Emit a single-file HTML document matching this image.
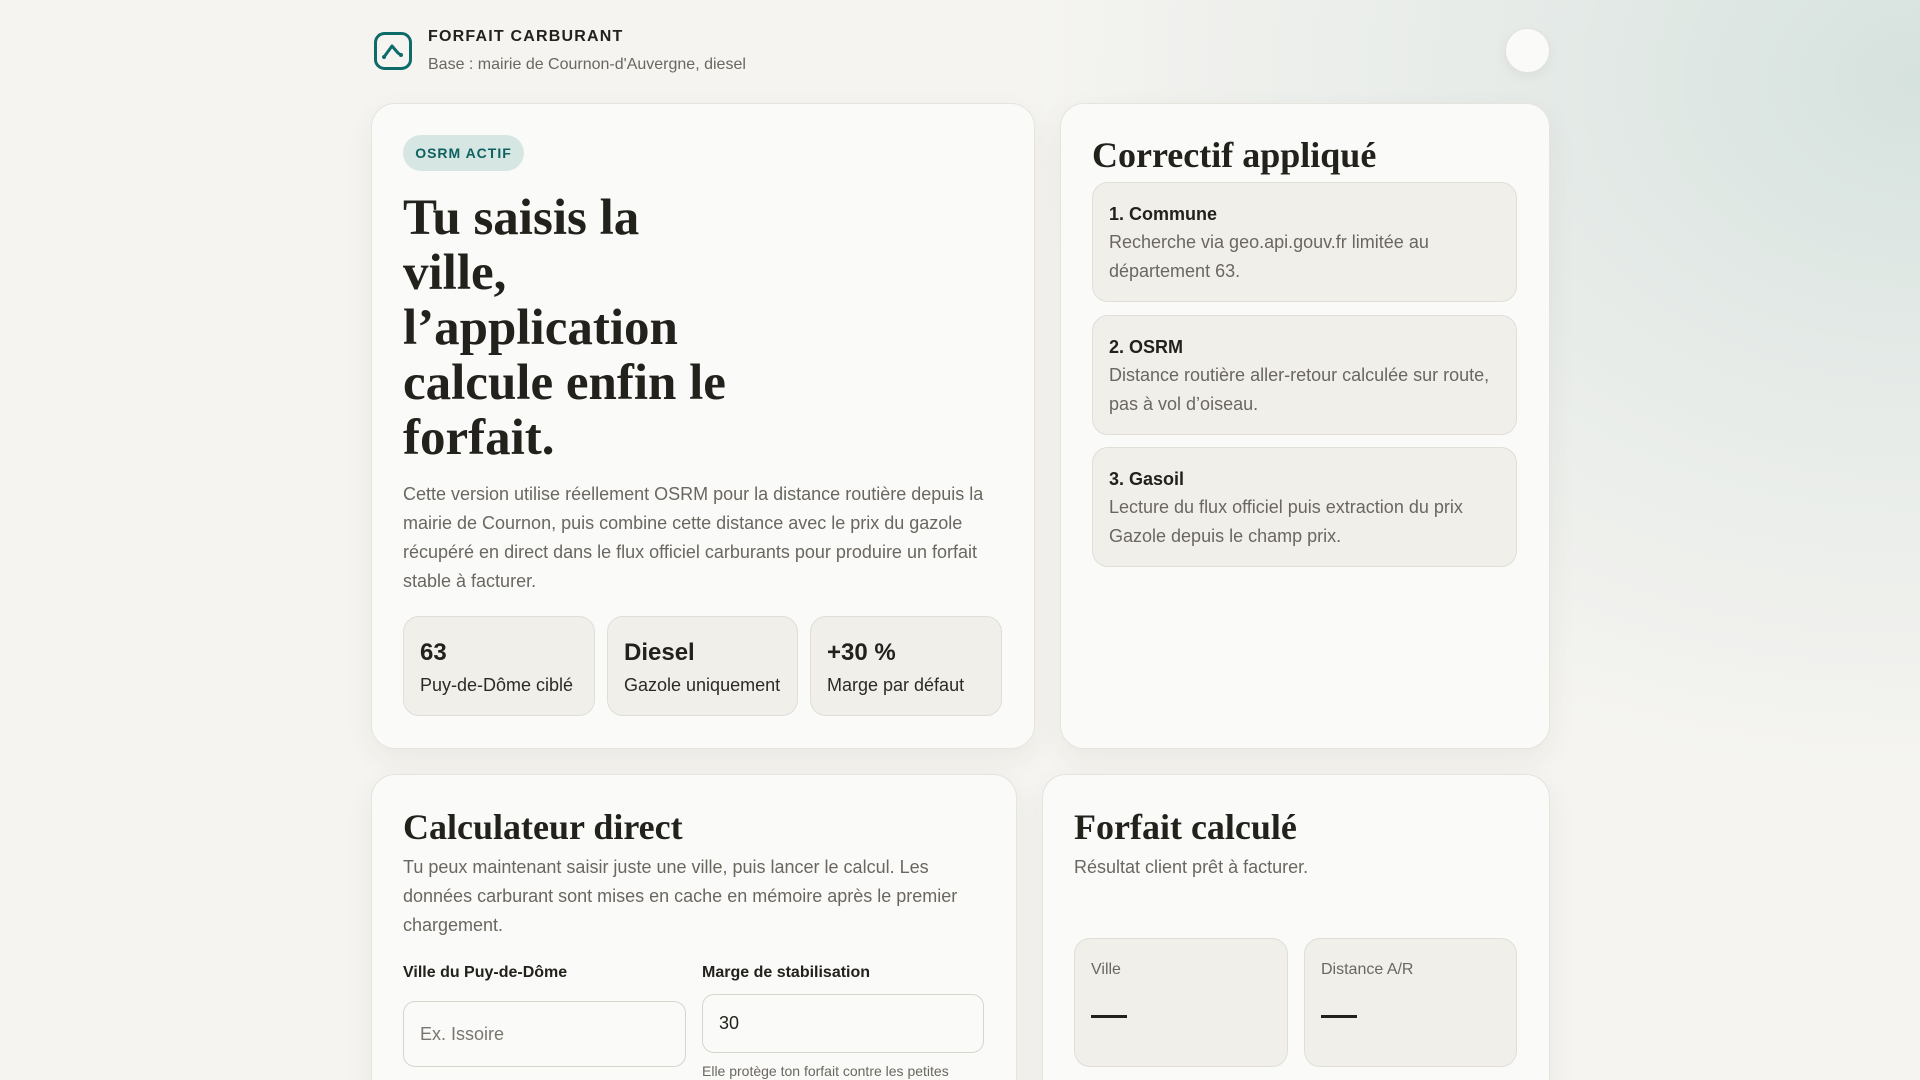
<!DOCTYPE html>
<html><head><meta charset="utf-8"><style>
*{box-sizing:border-box;margin:0;padding:0}
html{width:1920px;height:1080px;overflow:hidden;background:#f5f4f0}
body{width:1920px;height:1080px;overflow:hidden;font-family:"Liberation Sans",sans-serif;color:#23211c;
background:radial-gradient(ellipse 900px 700px at 1920px 80px,#d6e2de 0%,#e6ebe8 45%,rgba(245,244,240,0) 100%),#f5f4f0;position:relative}
.abs{position:absolute}
.card{position:absolute;background:#fafaf8;border:1px solid #e7e4de;border-radius:24px;box-shadow:0 10px 30px rgba(60,50,30,.06)}
.serif{font-family:"Liberation Serif",serif;font-weight:bold;color:#23211c}
.muted{color:#6b6760}
.stat{position:absolute;top:616px;height:100px;background:#f0efea;border:1px solid #e1ded7;border-radius:16px;padding:22px 16px}
.stat b{display:block;font-size:24px;line-height:28px}
.stat span{display:block;font-size:18px;margin-top:8px;color:#2c2a25}
.step{position:absolute;left:1092px;width:425px;height:120px;background:#f0efea;border:1px solid #e1ded7;border-radius:16px;padding:17px 16px}
.step b{display:block;font-size:18px;line-height:28px}
.step p{font-size:18px;line-height:29px;color:#6b6760}
.res{position:absolute;top:938px;height:129px;background:#f0efea;border:1px solid #e1ded7;border-radius:16px;padding:22px 16px}
.res span{display:block;font-size:16px;color:#6b6760}
.res i{display:block;width:36px;height:3px;background:#23211c;margin-top:36px}
.inp{position:absolute;background:#fafaf8;border:1px solid #d9d5cd;border-radius:12px;font-size:18px;padding:0 16px;display:flex;align-items:center}
</style></head><body>
<svg class="abs" style="left:373px;top:31px" width="40" height="40" viewBox="0 0 40 40"><rect x="2.5" y="2.5" width="35" height="35" rx="9" fill="none" stroke="#0f6a6a" stroke-width="3"/><path d="M11 26 L19 15 L25 22 L28 24" fill="none" stroke="#0f6a6a" stroke-width="3" stroke-linecap="round" stroke-linejoin="round"/><circle cx="11" cy="26" r="2" fill="#0f6a6a"/><circle cx="28" cy="24" r="2" fill="#0f6a6a"/></svg>
<div class="abs" style="left:428px;top:28px;font-size:16px;font-weight:bold;letter-spacing:1.2px">FORFAIT CARBURANT</div>
<div class="abs muted" style="left:428px;top:56px;font-size:16px">Base : mairie de Cournon-d'Auvergne, diesel</div>
<div class="abs" style="left:1505px;top:28px;width:45px;height:45px;border-radius:50%;background:#fafaf8;border:1px solid #e4e2dc;box-shadow:0 4px 12px rgba(0,0,0,.05)"></div>

<div class="card" style="left:371px;top:103px;width:664px;height:646px"></div>
<div class="abs" style="left:403px;top:135px;width:121px;height:36px;border-radius:18px;background:#d6e7e3;color:#0f6060;font-size:14px;font-weight:bold;letter-spacing:1px;line-height:36px;text-align:center">OSRM ACTIF</div>
<div class="abs serif" style="left:403px;top:191px;width:335px;font-size:51px;line-height:55px">Tu saisis la ville, l’application calcule enfin le forfait.</div>
<div class="abs muted" style="left:403px;top:480px;width:600px;font-size:18px;line-height:29px">Cette version utilise réellement OSRM pour la distance routière depuis la mairie de Cournon, puis combine cette distance avec le prix du gazole récupéré en direct dans le flux officiel carburants pour produire un forfait stable à facturer.</div>
<div class="stat" style="left:403px;width:192px"><b>63</b><span>Puy-de-Dôme ciblé</span></div>
<div class="stat" style="left:607px;width:191px"><b>Diesel</b><span>Gazole uniquement</span></div>
<div class="stat" style="left:810px;width:192px"><b>+30 %</b><span>Marge par défaut</span></div>

<div class="card" style="left:1060px;top:103px;width:490px;height:646px"></div>
<div class="abs serif" style="left:1092px;top:133px;font-size:36px;line-height:44px">Correctif appliqué</div>
<div class="step" style="top:182px"><b>1. Commune</b><p>Recherche via geo.api.gouv.fr limitée au département 63.</p></div>
<div class="step" style="top:315px"><b>2. OSRM</b><p>Distance routière aller-retour calculée sur route, pas à vol d’oiseau.</p></div>
<div class="step" style="top:447px"><b>3. Gasoil</b><p>Lecture du flux officiel puis extraction du prix Gazole depuis le champ prix.</p></div>

<div class="card" style="left:371px;top:774px;width:646px;height:340px"></div>
<div class="abs serif" style="left:403px;top:805px;font-size:36px;line-height:44px">Calculateur direct</div>
<div class="abs muted" style="left:403px;top:853px;width:585px;font-size:18px;line-height:29px">Tu peux maintenant saisir juste une ville, puis lancer le calcul. Les données carburant sont mises en cache en mémoire après le premier chargement.</div>
<div class="abs" style="left:403px;top:964px;font-size:16px;font-weight:bold">Ville du Puy-de-Dôme</div>
<div class="abs" style="left:702px;top:964px;font-size:16px;font-weight:bold">Marge de stabilisation</div>
<div class="inp" style="left:403px;top:1001px;width:283px;height:66px;color:#7a766f">Ex. Issoire</div>
<div class="inp" style="left:702px;top:994px;width:282px;height:59px">30</div>
<div class="abs muted" style="left:702px;top:1063px;font-size:14px">Elle protège ton forfait contre les petites</div>

<div class="card" style="left:1042px;top:774px;width:508px;height:340px"></div>
<div class="abs serif" style="left:1074px;top:805px;font-size:36px;line-height:44px">Forfait calculé</div>
<div class="abs muted" style="left:1074px;top:857px;font-size:18px">Résultat client prêt à facturer.</div>
<div class="res" style="left:1074px;width:214px"><span>Ville</span><i></i></div>
<div class="res" style="left:1304px;width:213px"><span>Distance A/R</span><i></i></div>
</body></html>
